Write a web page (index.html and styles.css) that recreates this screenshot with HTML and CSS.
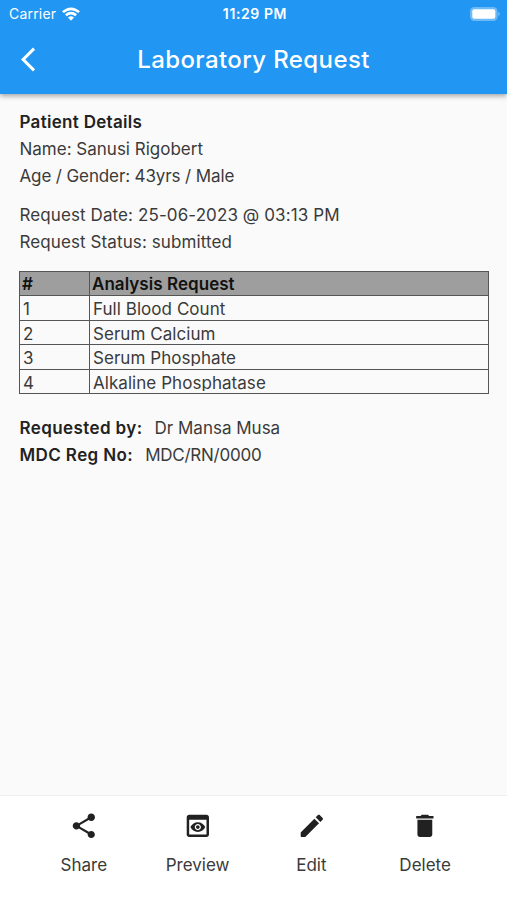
FILE: index.html
```html
<!DOCTYPE html>
<html lang="en">
<head>
    <meta charset="UTF-8">
    <meta name="viewport" content="width=device-width, initial-scale=1.0">
    <title>Laboratory Request</title>
    <link rel="stylesheet" href="styles.css">
</head>
<body>

<header class="app_bar">
    <div class="status_bar">
        <div class="carrier">
            <span>Carrier</span>
            <svg class="wifi" viewBox="0 0 18 14">
                <path d="M0 4.2Q9-3.4 18 4.2L16.2 6.1Q9 .2 1.8 6.1Z"/>
                <path d="M3 7.3Q9 2.4 15 7.3L13.2 9.2Q9 5.9 4.8 9.2Z"/>
                <path d="M6 10.4Q9 8 12 10.4L9 13.8Z"/>
            </svg>
        </div>
        <span class="clock">11:29 PM</span>
        <svg class="battery" viewBox="0 0 31 14">
            <rect width="27.6" height="14" rx="4.4" opacity=".35"/>
            <rect x="2.3" y="2.3" width="23" height="9.4" rx="2"/>
            <path d="M28.4 4.8q3 2.2 0 4.4z" opacity=".4"/>
        </svg>
    </div>
    <div class="title_bar">
        <svg class="back" viewBox="0 0 12 24"><path d="M11.67 3.87L9.9 2.1 0 12l9.9 9.9 1.77-1.77L3.54 12z"/></svg>
        <h1>Laboratory Request</h1>
    </div>
</header>

<main class="content">
    <section class="details">
        <p><b>Patient Details</b></p>
        <p class="name">Name: Sanusi Rigobert</p>
        <p class="tight">Age / Gender: 43yrs / Male</p>
    </section>
    <section class="details">
        <p>Request Date: 25-06-2023 @ 03:13 PM</p>
        <p>Request Status: submitted</p>
    </section>

    <table class="analysis">
        <thead>
            <tr><th class="number">#</th><th>Analysis Request</th></tr>
        </thead>
        <tbody>
            <tr><td>1</td><td><div>Full Blood Count</div></td></tr>
            <tr><td>2</td><td><div>Serum Calcium</div></td></tr>
            <tr><td>3</td><td><div>Serum Phosphate</div></td></tr>
            <tr><td>4</td><td><div>Alkaline Phosphatase</div></td></tr>
        </tbody>
    </table>

    <section class="details requester">
        <p><b>Requested by:</b><span>Dr Mansa Musa</span></p>
        <p><b>MDC Reg No:</b><span class="reg_no">MDC/RN/0000</span></p>
    </section>
</main>

<nav class="actions">
    <a class="action">
        <svg viewBox="0 0 24 24"><path d="M18 16.08c-.76 0-1.44.3-1.96.77L8.91 12.7c.05-.23.09-.46.09-.7s-.04-.47-.09-.7l7.05-4.11c.54.5 1.25.81 2.04.81 1.66 0 3-1.34 3-3s-1.34-3-3-3-3 1.34-3 3c0 .24.04.47.09.7L8.04 9.81C7.5 9.31 6.79 9 6 9c-1.66 0-3 1.34-3 3s1.34 3 3 3c.79 0 1.5-.31 2.04-.81l7.12 4.16c-.05.21-.08.43-.08.65 0 1.61 1.31 2.92 2.92 2.92s2.92-1.31 2.92-2.92-1.31-2.92-2.92-2.92z"/></svg>
        <span>Share</span>
    </a>
    <a class="action">
        <svg viewBox="0 0 24 24"><path d="M19 3H5c-1.11 0-2 .9-2 2v14c0 1.1.89 2 2 2h14c1.1 0 2-.9 2-2V5c0-1.1-.89-2-2-2zm0 16H5V7h14v12zm-5.5-6c0 .83-.67 1.5-1.5 1.5s-1.5-.67-1.5-1.5.67-1.5 1.5-1.5 1.5.67 1.5 1.5zM12 9c-2.73 0-5.06 1.66-6 4 .94 2.34 3.27 4 6 4s5.06-1.66 6-4c-.94-2.34-3.27-4-6-4zm0 6.5c-1.38 0-2.5-1.12-2.5-2.5s1.12-2.5 2.5-2.5 2.5 1.12 2.5 2.5-1.12 2.5-2.5 2.5z"/></svg>
        <span>Preview</span>
    </a>
    <a class="action">
        <svg viewBox="0 0 24 24"><path d="M3 17.46v3.04c0 .28.22.5.5.5h3.04c.13 0 .26-.05.35-.15L17.81 9.94l-3.75-3.75L3.15 17.1c-.1.1-.15.22-.15.36zM20.71 7.04c.39-.39.39-1.02 0-1.41l-2.34-2.34c-.39-.39-1.02-.39-1.41 0l-1.83 1.83 3.75 3.75 1.83-1.83z"/></svg>
        <span>Edit</span>
    </a>
    <a class="action">
        <svg viewBox="0 0 24 24"><path d="M6 19c0 1.1.9 2 2 2h8c1.1 0 2-.9 2-2V7H6v12zM19 4h-3.5l-1-1h-5l-1 1H5v2h14V4z"/></svg>
        <span>Delete</span>
    </a>
</nav>

</body>
</html>
```

FILE: styles.css
```css
* {
    box-sizing: border-box;
}

body {
    display: flex;
    flex-direction: column;
    height: 900px;
    margin: 0;
    background: #fafafa;
    color: #3a3a3a;
    font-family: Inter, sans-serif;
    font-size: 17px;
}

h1, p {
    margin: 0;
}

svg {
    display: block;
    fill: currentColor;
}

.app_bar {
    height: 94px;
    background: #2196f3;
    color: #fff;
    box-shadow: 0 2px 5px rgba(0, 0, 0, 0.35);
}

.status_bar {
    display: grid;
    grid-template-columns: 1fr auto 1fr;
    align-items: center;
    height: 27px;
    padding: 0 6px 0 9px;
    font-size: 14px;
}

.carrier {
    display: flex;
    align-items: center;
    gap: 6px;
    letter-spacing: 0.2px;
}

.wifi {
    width: 18px;
    height: 14px;
}

.clock {
    font-weight: 600;
    letter-spacing: 0.6px;
}

.battery {
    justify-self: end;
    width: 31px;
    height: 14px;
}

.title_bar {
    display: grid;
    grid-template-columns: 40px 1fr 40px;
    align-items: center;
    height: 65px;
    padding: 0 20px;
}

.back {
    width: 14.5px;
    height: 29px;
    margin-left: 1px;
}

h1 {
    font-size: 24px;
    font-weight: 500;
    letter-spacing: 0.4px;
    text-align: center;
}

.content {
    flex: 1;
    padding: 15px 18px 0 19px;
}

.details {
    margin-bottom: 12px;
    padding-left: 0.5px;
    line-height: 27px;
    letter-spacing: 0.1px;
}

.details b {
    font-weight: 600;
    letter-spacing: 0.3px;
    color: #222;
}

.details .name {
    letter-spacing: 0;
}

.details .tight {
    letter-spacing: -0.12px;
}

.analysis {
    width: 470px;
    margin: 15px 0 21px;
    border-collapse: collapse;
    table-layout: fixed;
    line-height: 20px;
    letter-spacing: 0.05px;
}

.analysis th,
.analysis td {
    height: 24.4px;
    padding: 3px 3px 0;
    border: 1px solid #555;
    text-align: left;
    vertical-align: top;
}

.analysis th {
    padding: 2px 2px 0;
    background: #9e9e9e;
    color: #111;
    font-weight: 600;
}

/* long names are cut off just under the baseline */
.analysis div {
    height: 18px;
    overflow: hidden;
}

.number {
    width: 70px;
}

.requester b {
    letter-spacing: 0.4px;
}

.requester span {
    margin-left: 12px;
    letter-spacing: 0;
}

.requester .reg_no {
    letter-spacing: -0.25px;
}

.actions {
    display: grid;
    grid-template-columns: repeat(4, 1fr);
    height: 105px;
    padding: 15px 25px 0 27px;
    border-top: 1px solid #eee;
    background: #fff;
}

.action {
    display: flex;
    flex-direction: column;
    align-items: center;
    gap: 14px;
    line-height: 20px;
}

.action svg {
    width: 29.7px;
    height: 29.7px;
    color: #212121;
}
```
